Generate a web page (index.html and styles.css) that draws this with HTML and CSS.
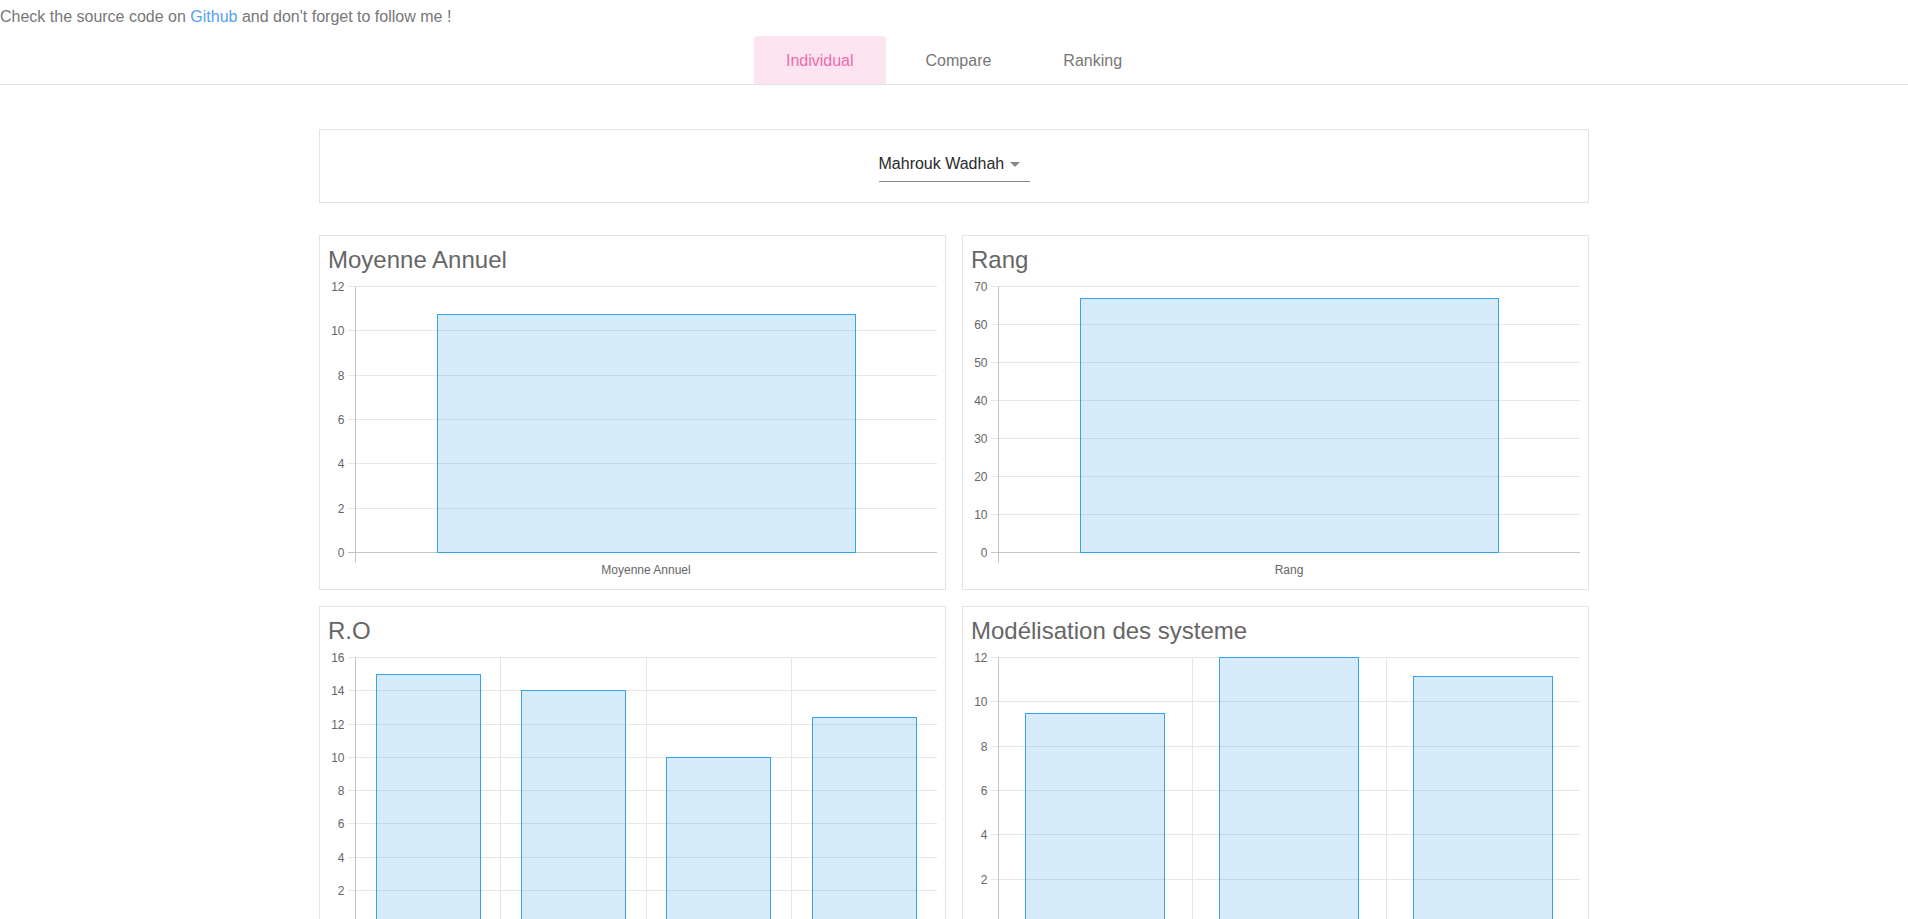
FILE: index.html
```html
<!DOCTYPE html>
<html lang="fr">
<head>
<meta charset="utf-8">
<title>Notes</title>
<link rel="stylesheet" href="styles.css">
</head>
<body>
<div class="topline">Check the source code on <a class="gh" href="#">Github</a> and don't forget to follow me !</div>
<nav class="tabs">
  <a class="tab active" href="#">Individual</a>
  <a class="tab" href="#">Compare</a>
  <a class="tab" href="#">Ranking</a>
</nav>
<main class="container">
  <section class="card select-card">
    <div class="select">
      <span class="select-text">Mahrouk Wadhah</span>
      <span class="caret"></span>
    </div>
  </section>
  <div class="grid">
    <section class="card chart-card">
      <h3 class="chart-title">Moyenne Annuel</h3>
      <svg class="chart" width="609" height="309" viewBox="0 0 609 309">
        <g class="grid-h">
          <line x1="20" y1="14.5" x2="609" y2="14.5"/>
          <line x1="20" y1="58.5" x2="609" y2="58.5"/>
          <line x1="20" y1="103.5" x2="609" y2="103.5"/>
          <line x1="20" y1="147.5" x2="609" y2="147.5"/>
          <line x1="20" y1="191.5" x2="609" y2="191.5"/>
          <line x1="20" y1="236.5" x2="609" y2="236.5"/>
        </g>
        <line class="zero" x1="20" y1="280.5" x2="609" y2="280.5"/>
        <line class="zero" x1="27.5" y1="14.5" x2="27.5" y2="290.5"/>
        <rect class="bar" x="109.5" y="42.5" width="418" height="238"/>
        <g class="ylab">
          <text x="16.5" y="18.5">12</text>
          <text x="16.5" y="62.5">10</text>
          <text x="16.5" y="107.5">8</text>
          <text x="16.5" y="151.5">6</text>
          <text x="16.5" y="195.5">4</text>
          <text x="16.5" y="240.5">2</text>
          <text x="16.5" y="284.5">0</text>
        </g>
        <text class="xlab" x="318" y="302">Moyenne Annuel</text>
      </svg>
    </section>
    <section class="card chart-card">
      <h3 class="chart-title">Rang</h3>
      <svg class="chart" width="609" height="309" viewBox="0 0 609 309">
        <g class="grid-h">
          <line x1="20" y1="14.5" x2="609" y2="14.5"/>
          <line x1="20" y1="52.5" x2="609" y2="52.5"/>
          <line x1="20" y1="90.5" x2="609" y2="90.5"/>
          <line x1="20" y1="128.5" x2="609" y2="128.5"/>
          <line x1="20" y1="166.5" x2="609" y2="166.5"/>
          <line x1="20" y1="204.5" x2="609" y2="204.5"/>
          <line x1="20" y1="242.5" x2="609" y2="242.5"/>
        </g>
        <line class="zero" x1="20" y1="280.5" x2="609" y2="280.5"/>
        <line class="zero" x1="27.5" y1="14.5" x2="27.5" y2="290.5"/>
        <rect class="bar" x="109.5" y="26.5" width="418" height="254"/>
        <g class="ylab">
          <text x="16.5" y="18.5">70</text>
          <text x="16.5" y="56.5">60</text>
          <text x="16.5" y="94.5">50</text>
          <text x="16.5" y="132.5">40</text>
          <text x="16.5" y="170.5">30</text>
          <text x="16.5" y="208.5">20</text>
          <text x="16.5" y="246.5">10</text>
          <text x="16.5" y="284.5">0</text>
        </g>
        <text class="xlab" x="318" y="302">Rang</text>
      </svg>
    </section>
    <section class="card chart-card">
      <h3 class="chart-title">R.O</h3>
      <svg class="chart" width="609" height="309" viewBox="0 0 609 309">
        <g class="grid-h">
          <line x1="20" y1="14.5" x2="609" y2="14.5"/>
          <line x1="20" y1="47.5" x2="609" y2="47.5"/>
          <line x1="20" y1="81.5" x2="609" y2="81.5"/>
          <line x1="20" y1="114.5" x2="609" y2="114.5"/>
          <line x1="20" y1="147.5" x2="609" y2="147.5"/>
          <line x1="20" y1="180.5" x2="609" y2="180.5"/>
          <line x1="20" y1="214.5" x2="609" y2="214.5"/>
          <line x1="20" y1="247.5" x2="609" y2="247.5"/>
          <line x1="172.5" y1="14.5" x2="172.5" y2="290.5"/>
          <line x1="318.5" y1="14.5" x2="318.5" y2="290.5"/>
          <line x1="463.5" y1="14.5" x2="463.5" y2="290.5"/>
        </g>
        <line class="zero" x1="20" y1="280.5" x2="609" y2="280.5"/>
        <line class="zero" x1="27.5" y1="14.5" x2="27.5" y2="290.5"/>
        <rect class="bar" x="48.5" y="31.5" width="104" height="249"/>
        <rect class="bar" x="193.5" y="47.5" width="104" height="233"/>
        <rect class="bar" x="338.5" y="114.5" width="104" height="166"/>
        <rect class="bar" x="484.5" y="74.5" width="104" height="206"/>
        <g class="ylab">
          <text x="16.5" y="18.5">16</text>
          <text x="16.5" y="51.5">14</text>
          <text x="16.5" y="85.5">12</text>
          <text x="16.5" y="118.5">10</text>
          <text x="16.5" y="151.5">8</text>
          <text x="16.5" y="184.5">6</text>
          <text x="16.5" y="218.5">4</text>
          <text x="16.5" y="251.5">2</text>
          <text x="16.5" y="284.5">0</text>
        </g>
      </svg>
    </section>
    <section class="card chart-card">
      <h3 class="chart-title">Modélisation des systeme</h3>
      <svg class="chart" width="609" height="309" viewBox="0 0 609 309">
        <g class="grid-h">
          <line x1="20" y1="14.5" x2="609" y2="14.5"/>
          <line x1="20" y1="58.5" x2="609" y2="58.5"/>
          <line x1="20" y1="103.5" x2="609" y2="103.5"/>
          <line x1="20" y1="147.5" x2="609" y2="147.5"/>
          <line x1="20" y1="191.5" x2="609" y2="191.5"/>
          <line x1="20" y1="236.5" x2="609" y2="236.5"/>
          <line x1="221.5" y1="14.5" x2="221.5" y2="290.5"/>
          <line x1="415.5" y1="14.5" x2="415.5" y2="290.5"/>
        </g>
        <line class="zero" x1="20" y1="280.5" x2="609" y2="280.5"/>
        <line class="zero" x1="27.5" y1="14.5" x2="27.5" y2="290.5"/>
        <rect class="bar" x="54.5" y="70.5" width="139" height="210"/>
        <rect class="bar" x="248.5" y="14.5" width="139" height="266"/>
        <rect class="bar" x="442.5" y="33.5" width="139" height="247"/>
        <g class="ylab">
          <text x="16.5" y="18.5">12</text>
          <text x="16.5" y="62.5">10</text>
          <text x="16.5" y="107.5">8</text>
          <text x="16.5" y="151.5">6</text>
          <text x="16.5" y="195.5">4</text>
          <text x="16.5" y="240.5">2</text>
          <text x="16.5" y="284.5">0</text>
        </g>
      </svg>
    </section>
  </div>
</main>
</body>
</html>
```
FILE: styles.css
```css
html, body {
  margin: 0;
  padding: 0;
  background: #fff;
}
body {
  font-family: "Liberation Sans", Arial, sans-serif;
  font-size: 16px;
  color: #777;
}
.topline {
  padding-top: 5px;
  line-height: 24px;
  color: #777;
}
.gh {
  color: #55a1f2;
  text-decoration: none;
}
.tabs {
  margin-top: 7px;
  display: flex;
  justify-content: center;
  gap: 8px;
  border-bottom: 1px solid #e2e2e2;
}
.tab {
  display: block;
  padding: 2px 32px 0;
  height: 46px;
  line-height: 46px;
  color: #777;
  text-decoration: none;
  border-radius: 4px 4px 0 0;
}
.tab.active {
  background: #fce4f0;
  color: #f06aae;
}
.container {
  width: 1270px;
  margin: 44px auto 0;
}
.card {
  border: 1px solid #e4e4e4;
  background: #fff;
  box-sizing: border-box;
}
.select-card {
  display: flex;
  justify-content: center;
  padding: 15px 0 20px;
}
.select {
  display: flex;
  align-items: center;
  width: 151px;
  padding: 9px 0 7px;
  line-height: 20px;
  border-bottom: 1px solid #8a8a8a;
}
.select-text {
  color: #2a2a2a;
}
.caret {
  margin-left: 6px;
  width: 0;
  height: 0;
  border-left: 5px solid transparent;
  border-right: 5px solid transparent;
  border-top: 5px solid #888;
}
.grid {
  margin-top: 32px;
  display: grid;
  grid-template-columns: 627px 627px;
  gap: 16px;
}
.chart-card {
  padding: 11px 8px 8px;
}
.chart-title {
  margin: 0;
  font-size: 24px;
  line-height: 25px;
  font-weight: normal;
  color: #666;
}
.chart {
  display: block;
}
.grid-h line {
  stroke: #e6e6e6;
  stroke-width: 1;
}
.zero {
  stroke: #c4c4c4;
  stroke-width: 1;
}
.bar {
  fill: rgba(54, 162, 235, 0.2);
  stroke: rgb(54, 162, 235);
  stroke-width: 1;
}
.ylab text {
  font-family: "Liberation Sans", Arial, sans-serif;
  font-size: 12px;
  fill: #666;
  text-anchor: end;
}
.xlab {
  font-family: "Liberation Sans", Arial, sans-serif;
  font-size: 12px;
  fill: #666;
  text-anchor: middle;
}
```
